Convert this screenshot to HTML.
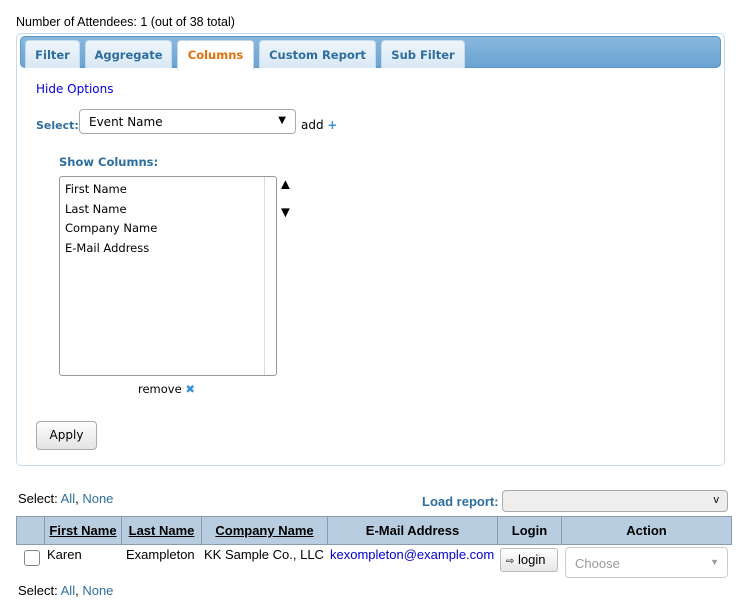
<!DOCTYPE html>
<html><head><style>
body{margin:0;width:754px;height:614px;background:#fff;position:relative;font-family:"Liberation Sans",sans-serif;font-size:13px;color:#000;overflow:hidden}
.a{position:absolute}
.v{font-family:"DejaVu Sans",sans-serif;font-size:11px}
.tab{position:absolute;top:40px;height:28px;background:linear-gradient(#eef5fb,#d9e8f5);border:1px solid #c5dbec;border-bottom:none;border-radius:4px 4px 0 0;font-family:"DejaVu Sans",sans-serif;font-weight:bold;font-size:11.5px;color:#2e6e9e;text-align:center;line-height:28px;box-sizing:border-box}
.lbl{color:#2e6e9e;font-weight:bold}
th{font-weight:bold;font-size:13px;height:27px;border-right:1px solid #8a9ab0;padding:0}
th u{text-decoration:underline}
</style></head><body>
<div class="a" style="left:16px;top:15px;font-size:12.5px">Number of Attendees: 1 (out of 38 total)</div>
<div class="a" style="left:16px;top:33px;width:707px;height:431px;border:1px solid #c5dbec;border-radius:5px"></div>
<div class="a" style="left:20px;top:36px;width:701px;height:32px;background:linear-gradient(#8ab8de,#6aa3d2);border-radius:5px;border:1px solid #5b97c8;box-sizing:border-box"></div>
<div class="tab" style="left:25px;width:55px">Filter</div>
<div class="tab" style="left:85px;width:87px">Aggregate</div>
<div class="tab" style="left:177px;width:77px;background:#fff;color:#e17009;height:30px">Columns</div>
<div class="tab" style="left:259px;width:117px">Custom Report</div>
<div class="tab" style="left:381px;width:84px">Sub Filter</div>
<div class="a v" style="left:36px;top:82px;color:#0000dd;font-size:12px">Hide Options</div>
<div class="a v lbl" style="left:36px;top:119px;font-size:11px">Select:</div>
<div class="a v" style="left:79px;top:109px;width:217px;height:25px;border:1px solid #aaa;border-radius:4px;box-sizing:border-box;padding:5px 9px;font-size:12px">Event Name<span class="a" style="right:9px;top:5px;font-size:10px">▼</span></div>
<div class="a v" style="left:301px;top:118px;font-size:12px">add <span style="color:#3b8ed8;font-weight:bold">+</span></div>
<div class="a v lbl" style="left:59px;top:155px;font-size:11.5px">Show Columns:</div>
<div class="a v" style="left:59px;top:176px;width:218px;height:200px;border:1px solid #999;border-radius:3px;box-sizing:border-box;padding:3px 5px;line-height:19.5px;font-size:11.5px">First Name<br>Last Name<br>Company Name<br>E-Mail Address
<div class="a" style="left:204px;top:0;width:1px;height:198px;background:#ddd"></div></div>
<div class="a" style="left:278px;top:176px;font-size:15px">▲</div>
<div class="a" style="left:278px;top:204px;font-size:15px">▼</div>
<div class="a v" style="left:138px;top:382px;font-size:11.5px">remove <span style="color:#3b8ed8;font-weight:bold">✖</span></div>
<div class="a v" style="left:36px;top:421px;width:61px;height:29px;border:1px solid #aaa;border-radius:4px;box-sizing:border-box;background:linear-gradient(#fdfdfd,#e4e4e4);text-align:center;line-height:27px;font-size:12px">Apply</div>
<div class="a" style="left:18px;top:491px">Select: <span style="color:#2e6e9e">All</span>, <span style="color:#2e6e9e">None</span></div>
<div class="a lbl" style="left:422px;top:494px;font-size:13px">Load report:</div>
<div class="a" style="left:502px;top:490px;width:226px;height:22px;border:1px solid #aaa;border-radius:4px;box-sizing:border-box;background:#eee"><span class="a" style="right:8px;top:3px;font-size:11px">v</span></div>
<table class="a" style="left:16px;top:516px;width:716px;border-collapse:collapse">
<tr style="background:#b8cde0;border:1px solid #8a9ab0">
<th style="width:27px"></th><th style="width:76px"><u>First Name</u></th><th style="width:79px"><u>Last Name</u></th><th style="width:125px"><u>Company Name</u></th><th style="width:169px">E-Mail Address</th><th style="width:63px">Login</th><th>Action</th></tr>
</table>
<div class="a" style="left:24px;top:550px;width:14px;height:14px;border:1px solid #888;border-radius:3px"></div>
<div class="a" style="left:47px;top:547px">Karen</div>
<div class="a" style="left:126px;top:547px">Exampleton</div>
<div class="a" style="left:204px;top:547px">KK Sample Co., LLC</div>
<div class="a" style="left:330px;top:547px;color:#0000cc">kexompleton@example.com</div>
<div class="a" style="left:500px;top:548px;width:58px;height:24px;border:1px solid #bbb;border-radius:3px;box-sizing:border-box;background:linear-gradient(#fff,#e6e6e6);line-height:22px;padding-left:5px"><span style="font-size:10px">⇨</span> login</div>
<div class="a" style="left:565px;top:547px;width:163px;height:31px;border:1px solid #ccc;border-radius:4px;box-sizing:border-box;color:#999;padding:8px 9px">Choose<span class="a" style="right:8px;top:9px;font-size:9px">▼</span></div>
<div class="a" style="left:18px;top:583px">Select: <span style="color:#2e6e9e">All</span>, <span style="color:#2e6e9e">None</span></div>
</body></html>
